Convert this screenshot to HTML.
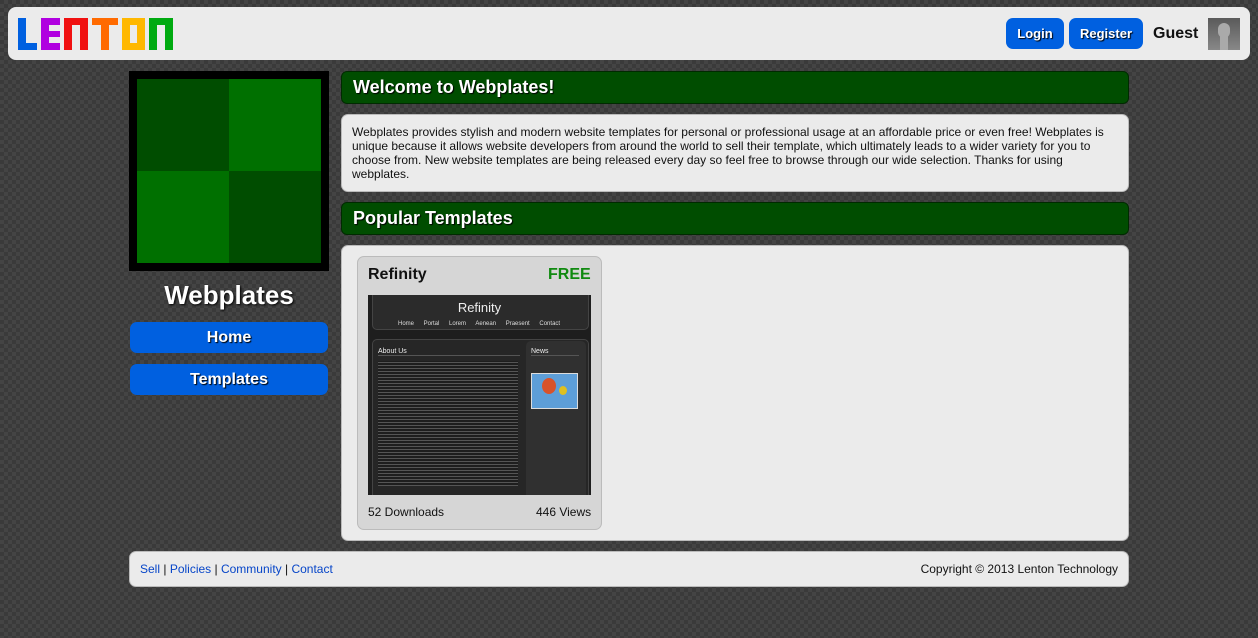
<!DOCTYPE html><html><head><style>
body{margin:0;width:1258px;height:638px;overflow:hidden;font-family:"Liberation Sans",sans-serif;background:#3a3a3a;background-image:linear-gradient(45deg,#444 25%,transparent 25%,transparent 75%,#444 75%),linear-gradient(45deg,#444 25%,transparent 25%,transparent 75%,#444 75%);background-size:8px 8px;background-position:0 0,4px 4px;position:relative}
.abs{position:absolute}
.hdr{left:8px;top:7px;width:1242px;height:53px;background:#ebebeb;border-radius:8px}
.btn{background:#0060e0;color:#fff;font-weight:bold;border-radius:7px;text-align:center;text-shadow:1px 1px 1px #000}
.bar{background:#004d00;border:1px solid #002a00;border-radius:6px;color:#fff;font-weight:bold;font-size:18px;box-sizing:border-box;padding-left:11px;line-height:31px;text-shadow:1px 1px 1px #000}
.box{background:#ebebeb;border-radius:7px;border:1px solid #bbb;box-sizing:border-box}
a{color:#0645c8;text-decoration:none}
</style></head><body>
<div class="abs hdr"></div>
<svg class="abs" style="left:0;top:0" width="200" height="60">
<g fill="#0060e0"><rect x="18" y="18" width="8" height="32"/><rect x="18" y="43" width="19" height="7"/></g>
<g fill="#b000e0"><rect x="41" y="18" width="8" height="32"/><rect x="41" y="18" width="19" height="7"/><rect x="41" y="31" width="19" height="6"/><rect x="41" y="43" width="19" height="7"/></g>
<g fill="#f01010"><rect x="64" y="18" width="8" height="32"/><rect x="80" y="18" width="8" height="32"/><rect x="64" y="18" width="24" height="7"/></g>
<g fill="#ff6a00"><rect x="92" y="18" width="26" height="7"/><rect x="101" y="18" width="8" height="32"/></g>
<g fill="#ffb800"><rect x="122" y="18" width="8" height="32"/><rect x="137" y="18" width="8" height="32"/><rect x="122" y="18" width="23" height="7"/><rect x="122" y="43" width="23" height="7"/></g>
<g fill="#00aa10"><rect x="149" y="18" width="8" height="32"/><rect x="165" y="18" width="8" height="32"/><rect x="149" y="18" width="24" height="7"/></g>
</svg>
<div class="abs btn" style="left:1006px;top:18px;width:58px;height:31px;line-height:31px;font-size:13px">Login</div>
<div class="abs btn" style="left:1069px;top:18px;width:74px;height:31px;line-height:31px;font-size:13px">Register</div>
<div class="abs" style="left:1153px;top:25px;font-size:16px;font-weight:bold;color:#111">Guest</div>
<div class="abs" style="left:1208px;top:18px;width:32px;height:32px;background:linear-gradient(#5a5a5a,#888);overflow:hidden"><div class="abs" style="left:10px;top:5px;width:12px;height:15px;border-radius:6px;background:#aaa"></div><div class="abs" style="left:12px;top:18px;width:8px;height:14px;background:#aaa"></div></div>

<div class="abs" style="left:129px;top:71px;width:200px;height:200px;background:#000"></div>
<div class="abs" style="left:137px;top:79px;width:92px;height:92px;background:#004d00"></div>
<div class="abs" style="left:229px;top:79px;width:92px;height:92px;background:#007000"></div>
<div class="abs" style="left:137px;top:171px;width:92px;height:92px;background:#007000"></div>
<div class="abs" style="left:229px;top:171px;width:92px;height:92px;background:#004d00"></div>
<div class="abs" style="left:129px;top:280px;width:200px;text-align:center;color:#fff;font-weight:bold;font-size:26px;text-shadow:1px 1px 2px #000">Webplates</div>
<div class="abs btn" style="left:130px;top:322px;width:198px;height:31px;line-height:32px;font-size:16px">Home</div>
<div class="abs btn" style="left:130px;top:364px;width:198px;height:31px;line-height:32px;font-size:16px">Templates</div>

<div class="abs bar" style="left:341px;top:71px;width:788px;height:33px">Welcome to Webplates!</div>
<div class="abs box" style="left:341px;top:114px;width:788px;height:78px;padding:10px 10px;font-size:12px;line-height:14px;color:#111;white-space:nowrap">Webplates provides stylish and modern website templates for personal or professional usage at an affordable price or even free! Webplates is<br>unique because it allows website developers from around the world to sell their template, which ultimately leads to a wider variety for you to<br>choose from. New website templates are being released every day so feel free to browse through our wide selection. Thanks for using<br>webplates.</div>
<div class="abs bar" style="left:341px;top:202px;width:788px;height:33px">Popular Templates</div>
<div class="abs box" style="left:341px;top:245px;width:788px;height:296px"></div>
<div class="abs" style="left:357px;top:256px;width:245px;height:274px;background:#d6d6d6;border:1px solid #bbb;border-radius:7px;box-sizing:border-box"></div>
<div class="abs" style="left:368px;top:266px;font-size:16px;font-weight:bold;color:#111">Refinity</div>
<div class="abs" style="left:548px;top:266px;font-size:16px;font-weight:bold;color:#108a10">FREE</div>
<div class="abs" style="left:368px;top:295px;width:223px;height:200px;background:#1e1e1e;overflow:hidden;font-size:4px;color:#aaa">
<div class="abs" style="left:4px;top:0;width:215px;height:34px;background:#2b2b2b;border-radius:0 0 5px 5px;border:1px solid #444;border-top:0"></div>
<div class="abs" style="left:0;top:5px;width:223px;text-align:center;color:#eee;font-size:13px">Refinity</div>
<div class="abs" style="left:30px;top:26px;color:#ddd;font-size:6px;word-spacing:8px">Home Portal Lorem Aenean Praesent Contact</div>
<div class="abs" style="left:4px;top:44px;width:215px;height:170px;background:#262626;border:1px solid #444;border-radius:5px"></div>
<div class="abs" style="left:158px;top:46px;width:60px;height:160px;background:#303030;border-radius:5px"></div>
<div class="abs" style="left:10px;top:53px;color:#eee;font-size:7px;width:142px;border-bottom:1px solid #555">About Us</div>
<div class="abs" style="left:163px;top:53px;color:#eee;font-size:7px;width:48px;border-bottom:1px solid #555">News</div>
<div class="abs" style="left:163px;top:78px;width:45px;height:34px;background:#5d9ed8;border:1px solid #ddd"><div class="abs" style="left:10px;top:4px;width:14px;height:16px;border-radius:50%;background:#d8522a"></div><div class="abs" style="left:27px;top:12px;width:8px;height:9px;border-radius:50%;background:#e0c020"></div></div>
<div class="abs" style="left:10px;top:66px;width:140px;height:125px;background:repeating-linear-gradient(#1e1e1e 0 1px,#555 1px 2px,#1e1e1e 2px 3px)"></div>
</div>
<div class="abs" style="left:368px;top:505px;font-size:12px;color:#111">52 Downloads</div>
<div class="abs" style="left:536px;top:505px;font-size:12px;color:#111">446 Views</div>

<div class="abs box" style="left:129px;top:551px;width:1000px;height:36px"></div>
<div class="abs" style="left:140px;top:562px;font-size:12px;color:#111"><a>Sell</a> | <a>Policies</a> | <a>Community</a> | <a>Contact</a></div>
<div class="abs" style="right:140px;top:562px;font-size:12px;color:#111">Copyright © 2013 Lenton Technology</div>
</body></html>
